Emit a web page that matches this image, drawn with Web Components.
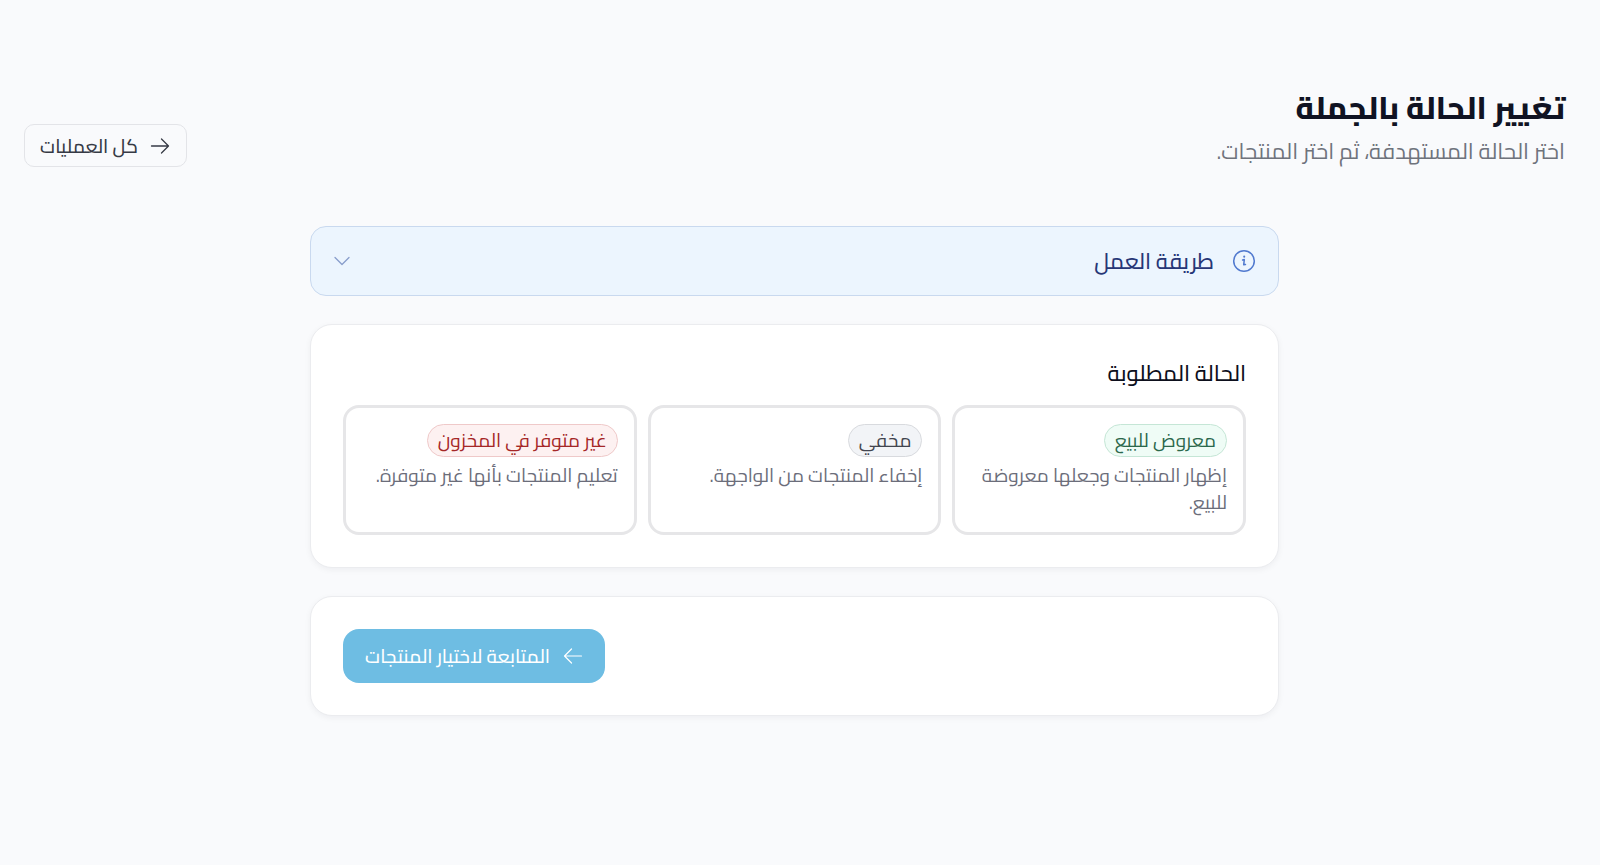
<!DOCTYPE html>
<html lang="ar" dir="rtl">
<head>
<meta charset="utf-8">
<meta name="viewport" content="width=device-width, initial-scale=1">
<title>تغيير الحالة بالجملة</title>
<style>
  body {
    margin: 0;
    background: #f9fafc;
    color: #101323;
    font-family: Cairo, "DejaVu Sans", sans-serif;
    font-size: 19px;
    line-height: 28px;
  }
</style>
</head>
<body>
<bulk-page>
  <page-header slot="header">
    <span slot="title">تغيير الحالة بالجملة</span>
    <span slot="subtitle">اختر الحالة المستهدفة، ثم اختر المنتجات.</span>
    <back-link slot="action" href="#operations">كل العمليات</back-link>
  </page-header>
  <info-panel>طريقة العمل</info-panel>
  <surface-card>
    <status-picker>
      <span slot="label">الحالة المطلوبة</span>
      <status-option tone="green" name="معروض للبيع">إظهار المنتجات وجعلها معروضة للبيع.</status-option>
      <status-option tone="gray" name="مخفي">إخفاء المنتجات من الواجهة.</status-option>
      <status-option tone="red" name="غير متوفر في المخزون">تعليم المنتجات بأنها غير متوفرة.</status-option>
    </status-picker>
  </surface-card>
  <surface-card>
    <continue-button>المتابعة لاختيار المنتجات</continue-button>
  </surface-card>
</bulk-page>

<script>
  const define = (name, html, setup) => {
    const template = document.createElement('template');
    template.innerHTML = '<style>*{box-sizing:border-box}:host{box-sizing:border-box}</style>' + html;
    customElements.define(name, class extends HTMLElement {
      constructor() {
        super();
        this.attachShadow({ mode: 'open' }).append(template.content.cloneNode(true));
      }
      connectedCallback() {
        if (setup) setup(this, this.shadowRoot);
      }
    });
  };

  define('bulk-page', `
    <style>
      :host { display: block; padding: 81px 35px 64px 24px; }
      main { display: flex; flex-direction: column; gap: 28px; max-width: 969px; margin: 54px auto 0; }
    </style>
    <slot name="header"></slot>
    <main><slot></slot></main>`);

  define('page-header', `
    <style>
      :host { display: flex; justify-content: space-between; align-items: flex-end; gap: 24px; flex-wrap: wrap; padding-bottom: 5px; }
      h1 { margin: 0; font-size: 31px; line-height: 54px; font-weight: 800; color: #101323; }
      p { margin: 0; font-size: 22px; line-height: 32px; font-weight: 400; color: #6f737c; }
    </style>
    <header>
      <h1><slot name="title"></slot></h1>
      <p><slot name="subtitle"></slot></p>
    </header>
    <slot name="action"></slot>`);

  define('back-link', `
    <style>
      :host { display: block; }
      a { display: flex; align-items: center; gap: 11px; height: 43px; padding: 0 15px; border: 1px solid #e3e4e8; border-radius: 10px; color: #363a45; text-decoration: none; font-size: 19px; font-weight: 500; white-space: nowrap; }
      svg { display: block; width: 22px; height: 22px; }
    </style>
    <a>
      <svg viewBox="0 0 22 22" fill="none" stroke="currentColor" stroke-width="1.3" stroke-linecap="round" stroke-linejoin="round" aria-hidden="true"><path d="M2.5 11h17M12.5 4l7 7-7 7"/></svg>
      <slot></slot>
    </a>`, (host, root) => { root.querySelector('a').href = host.getAttribute('href'); });

  define('info-panel', `
    <style>
      :host { display: block; }
      button { display: flex; align-items: center; width: 100%; height: 70px; padding: 0 22px; border: 1px solid #c9d9ef; border-radius: 16px; background: #ecf5fe; color: #263676; font: inherit; font-size: 22px; font-weight: 500; cursor: pointer; }
      span { margin-inline-start: 18px; }
      svg { display: block; width: 24px; height: 24px; }
      .info { color: #5079cf; }
      .chevron { margin-inline-start: auto; width: 18px; height: 18px; color: #889dcb; }
    </style>
    <button type="button" aria-expanded="false">
      <svg class="info" viewBox="0 0 24 24" fill="none" stroke="currentColor" stroke-width="1.5" stroke-linecap="round" stroke-linejoin="round" aria-hidden="true"><circle cx="12" cy="12" r="10.3"/><path d="M10.6 11l1.7-.4-.6 5.2 1.8-.4"/><path d="M12.2 7.6v.2" stroke-width="2"/></svg>
      <span><slot></slot></span>
      <svg class="chevron" viewBox="0 0 18 18" fill="none" stroke="currentColor" stroke-width="1.3" stroke-linecap="round" stroke-linejoin="round" aria-hidden="true"><path d="M2 5.5l7 7 7-7"/></svg>
    </button>`);

  define('surface-card', `
    <style>
      :host { display: block; padding: 32px; border: 1px solid #ebecef; border-radius: 22px; background: #fff; box-shadow: 0 2px 6px rgba(16, 24, 40, .05); }
    </style>
    <slot></slot>`);

  define('status-picker', `
    <style>
      :host { display: block; }
      h2 { margin: 0 0 16px; font-size: 22px; line-height: 32px; font-weight: 500; color: #0d0f1c; }
      div { display: grid; grid-template-columns: repeat(3, minmax(0, 1fr)); gap: 11px; }
    </style>
    <h2 id="label"><slot name="label"></slot></h2>
    <div role="group" aria-labelledby="label"><slot></slot></div>`);

  define('status-option', `
    <style>
      :host { display: grid; }
      button { display: flex; flex-direction: column; align-items: flex-start; gap: 5px; min-height: 129px; padding: 16px; border: 3px solid #e6e6e8; border-radius: 16px; background: #fff; font: inherit; text-align: start; cursor: pointer; }
      .badge { height: 33px; padding: 0 10px; border: 1px solid; border-radius: 17px; font-size: 19px; line-height: 31px; white-space: nowrap; }
      .text { font-size: 19px; line-height: 27px; color: #6b6d7a; }
      :host([tone=green]) .badge { background: #effcf6; border-color: #c5e6d6; color: #2b684c; }
      :host([tone=gray]) .badge { background: #f2f4f7; border-color: #d8dade; color: #42454f; }
      :host([tone=red]) .badge { background: #fdf1f1; border-color: #efc9c9; color: #a52727; }
    </style>
    <button type="button" aria-pressed="false">
      <span class="badge"></span>
      <span class="text"><slot></slot></span>
    </button>`, (host, root) => { root.querySelector('.badge').textContent = host.getAttribute('name'); });

  define('continue-button', `
    <style>
      :host { display: flex; justify-content: flex-end; }
      button { display: flex; align-items: center; gap: 13px; height: 54px; padding: 0 22px; border: 0; border-radius: 16px; background: #6ebde3; color: #fff; font: inherit; font-size: 19px; font-weight: 500; white-space: nowrap; }
      svg { display: block; width: 20px; height: 20px; }
    </style>
    <button type="button" disabled>
      <svg viewBox="0 0 20 20" fill="none" stroke="currentColor" stroke-width="1.2" stroke-linecap="round" stroke-linejoin="round" aria-hidden="true"><path d="M18.5 10h-17M8.5 3l-7 7 7 7"/></svg>
      <slot></slot>
    </button>`);
</script>
</body>
</html>
